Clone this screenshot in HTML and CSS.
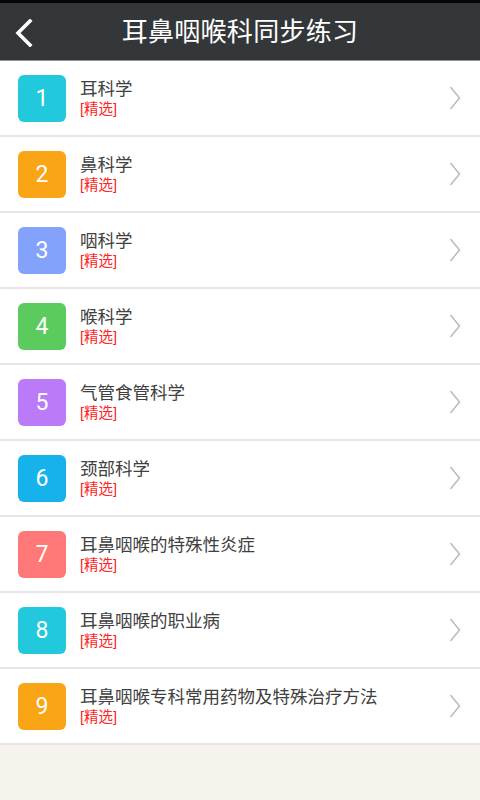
FILE: index.html
```html
<!DOCTYPE html>
<html lang="zh-CN">
<head>
<meta charset="utf-8">
<title>耳鼻咽喉科同步练习</title>
<link rel="stylesheet" href="styles.css">
</head>
<body>
<div class="status"></div>
<header class="topbar">
  <div class="back">
    <svg width="20" height="28" viewBox="0 0 20 28"><polyline points="15,2 3,14 15,26" fill="none" stroke="#fff" stroke-width="3.6" stroke-linecap="square" stroke-linejoin="miter"/></svg>
  </div>
  <h1 class="title">耳鼻咽喉科同步练习</h1>
  <div class="spacer"></div>
</header>
<ul class="list">
  <li class="row"><span class="num c1">1</span><div class="text"><div class="name">耳科学</div><div class="tag">[精选]</div></div><svg class="arrow" width="12" height="24" viewBox="0 0 12 24"><polyline points="1.5,1 10.5,12 1.5,23" fill="none" stroke="#bdbdbd" stroke-width="1.6"/></svg></li>
  <li class="row"><span class="num c2">2</span><div class="text"><div class="name">鼻科学</div><div class="tag">[精选]</div></div><svg class="arrow" width="12" height="24" viewBox="0 0 12 24"><polyline points="1.5,1 10.5,12 1.5,23" fill="none" stroke="#bdbdbd" stroke-width="1.6"/></svg></li>
  <li class="row"><span class="num c3">3</span><div class="text"><div class="name">咽科学</div><div class="tag">[精选]</div></div><svg class="arrow" width="12" height="24" viewBox="0 0 12 24"><polyline points="1.5,1 10.5,12 1.5,23" fill="none" stroke="#bdbdbd" stroke-width="1.6"/></svg></li>
  <li class="row"><span class="num c4">4</span><div class="text"><div class="name">喉科学</div><div class="tag">[精选]</div></div><svg class="arrow" width="12" height="24" viewBox="0 0 12 24"><polyline points="1.5,1 10.5,12 1.5,23" fill="none" stroke="#bdbdbd" stroke-width="1.6"/></svg></li>
  <li class="row"><span class="num c5">5</span><div class="text"><div class="name">气管食管科学</div><div class="tag">[精选]</div></div><svg class="arrow" width="12" height="24" viewBox="0 0 12 24"><polyline points="1.5,1 10.5,12 1.5,23" fill="none" stroke="#bdbdbd" stroke-width="1.6"/></svg></li>
  <li class="row"><span class="num c6">6</span><div class="text"><div class="name">颈部科学</div><div class="tag">[精选]</div></div><svg class="arrow" width="12" height="24" viewBox="0 0 12 24"><polyline points="1.5,1 10.5,12 1.5,23" fill="none" stroke="#bdbdbd" stroke-width="1.6"/></svg></li>
  <li class="row"><span class="num c7">7</span><div class="text"><div class="name">耳鼻咽喉的特殊性炎症</div><div class="tag">[精选]</div></div><svg class="arrow" width="12" height="24" viewBox="0 0 12 24"><polyline points="1.5,1 10.5,12 1.5,23" fill="none" stroke="#bdbdbd" stroke-width="1.6"/></svg></li>
  <li class="row"><span class="num c1">8</span><div class="text"><div class="name">耳鼻咽喉的职业病</div><div class="tag">[精选]</div></div><svg class="arrow" width="12" height="24" viewBox="0 0 12 24"><polyline points="1.5,1 10.5,12 1.5,23" fill="none" stroke="#bdbdbd" stroke-width="1.6"/></svg></li>
  <li class="row"><span class="num c2">9</span><div class="text"><div class="name">耳鼻咽喉专科常用药物及特殊治疗方法</div><div class="tag">[精选]</div></div><svg class="arrow" width="12" height="24" viewBox="0 0 12 24"><polyline points="1.5,1 10.5,12 1.5,23" fill="none" stroke="#bdbdbd" stroke-width="1.6"/></svg></li>
</ul>
</body>
</html>
```
FILE: styles.css
```css
* { box-sizing: border-box; }
html, body {
  margin: 0;
  padding: 0;
  background: #f6f3ec;
  font-family: "Liberation Sans", "Noto Sans CJK SC", sans-serif;
}
.status {
  height: 3px;
  background: #050505;
}
.topbar {
  height: 58px;
  background: #333739;
  border-bottom: 1px solid #8d9092;
  display: grid;
  grid-template-columns: 60px 1fr 60px;
  align-items: center;
}
.back {
  padding-left: 15px;
  padding-top: 2px;
  display: flex;
  align-items: center;
}
.back svg { display: block; }
.title {
  margin: 0;
  text-align: center;
  color: #ffffff;
  font-size: 26px;
  font-weight: normal;
  line-height: 30px;
  letter-spacing: 0.3px;
}
.list {
  list-style: none;
  margin: 0;
  padding: 0;
  background: #ffffff;
}
.row {
  height: 76px;
  border-bottom: 2px solid #e6e6e6;
  display: flex;
  align-items: center;
  padding-left: 18px;
  padding-right: 19px;
}
.num {
  width: 48px;
  height: 47px;
  border-radius: 6px;
  display: flex;
  align-items: center;
  justify-content: center;
  color: #ffffff;
  font-family: Roboto, "Noto Sans", sans-serif;
  font-size: 23px;
  flex: none;
}
.c1 { background: #22c8dc; }
.c2 { background: #f9a515; }
.c3 { background: #83a2fb; }
.c4 { background: #5bcb5d; }
.c5 { background: #bb7af8; }
.c6 { background: #16b2eb; }
.c7 { background: #fd7876; }
.text {
  flex: 1;
  margin-left: 14px;
  padding-top: 1px;
}
.name {
  font-size: 17.5px;
  line-height: 20px;
  color: #404040;
  white-space: nowrap;
}
.tag {
  font-size: 14.5px;
  line-height: 20px;
  color: #ff2424;
}
.arrow {
  flex: none;
  display: block;
}
```
